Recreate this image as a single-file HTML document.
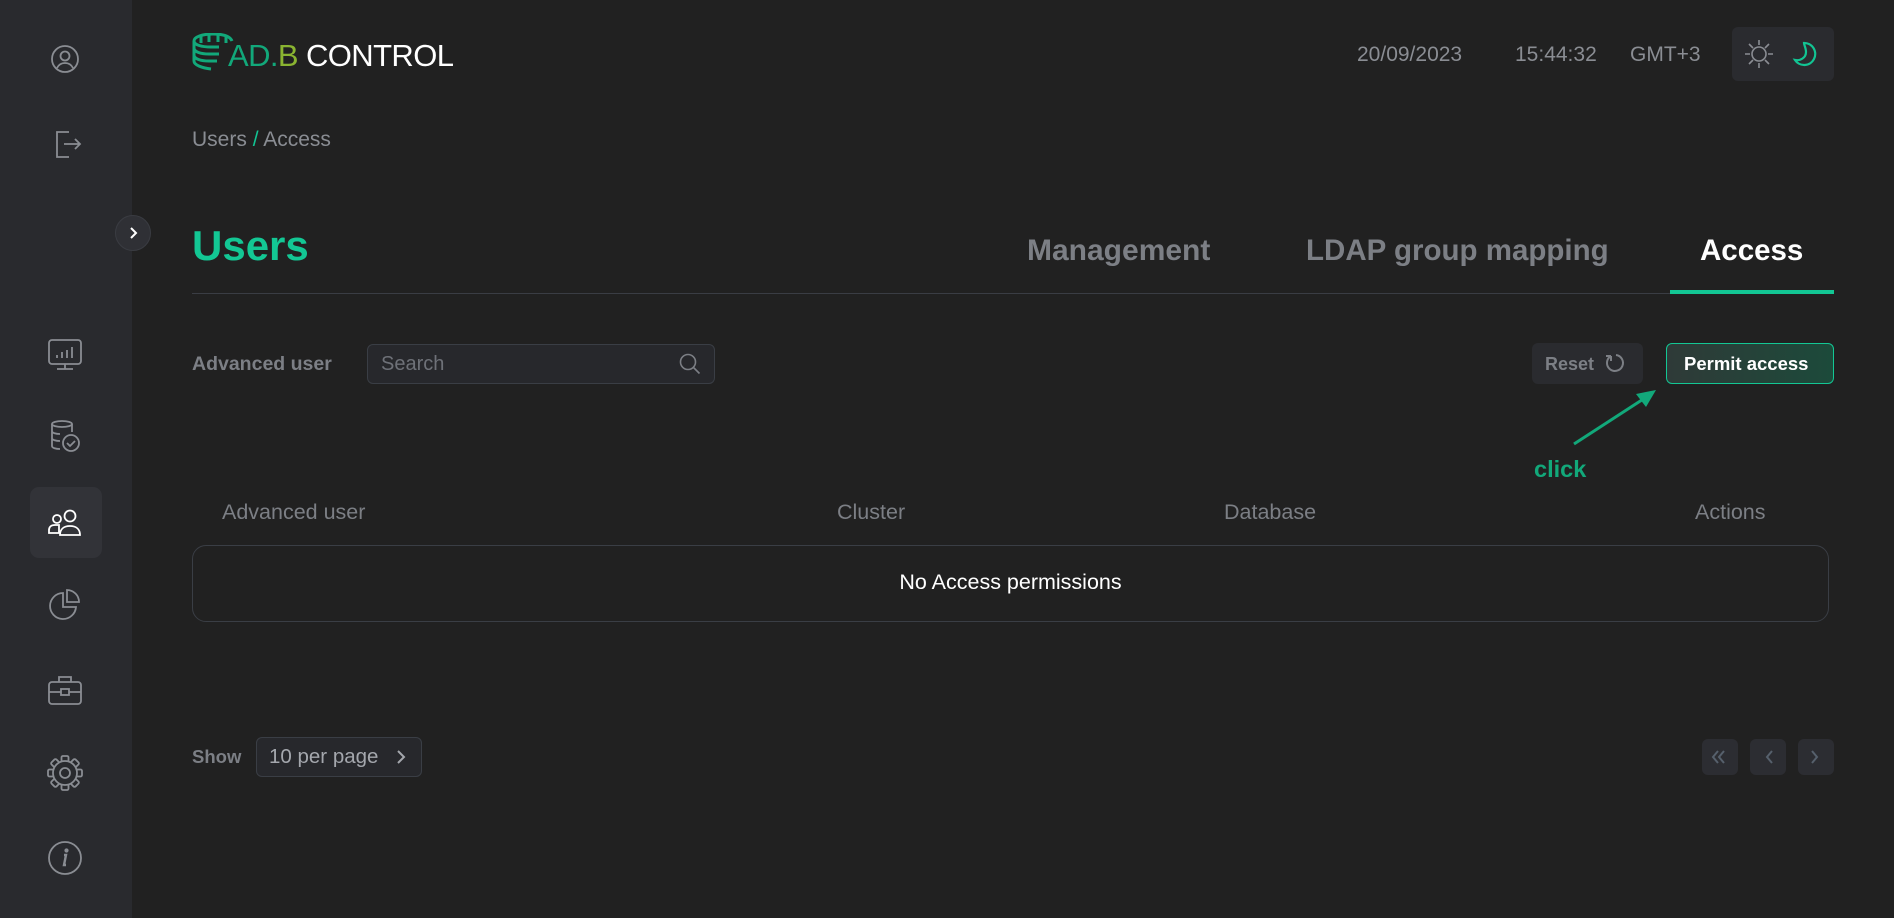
<!DOCTYPE html>
<html><head><meta charset="utf-8"><style>
*{margin:0;padding:0;box-sizing:border-box}
body{width:1894px;height:918px;background:#212121;font-family:"Liberation Sans",sans-serif;position:relative;overflow:hidden;color:#8a8d93}
.abs{position:absolute}
#side{left:0;top:0;width:132px;height:918px;background:#292a2e}
.ic{position:absolute;left:65px;transform:translate(-50%,-50%)}
.t{position:absolute;white-space:nowrap;line-height:1}
.box{position:absolute;border-radius:6px}
</style></head><body>
<div id="side" class="abs"></div>
<div class="box" style="left:30px;top:487px;width:72px;height:71px;background:#323338;border-radius:9px"></div>
<!-- sidebar icons -->
<svg class="ic" style="top:59px" width="30" height="30" viewBox="0 0 30 30" fill="none" stroke="#8a8d93" stroke-width="1.8"><circle cx="15" cy="15" r="13"/><circle cx="15" cy="12" r="4.5"/><path d="M7 24c2-4 5-5 8-5s6 1 8 5"/></svg>
<svg class="ic" style="top:144px;left:68px" width="32" height="32" viewBox="0 0 32 32" fill="none" stroke="#8a8d93" stroke-width="1.8"><path d="M17 4H5v25h12M12 16h16M23 11l5 5-5 5"/></svg>
<svg class="ic" style="top:354px" width="36" height="32" viewBox="0 0 36 32" fill="none" stroke="#8a8d93" stroke-width="1.8"><rect x="2" y="2" width="32" height="24" rx="3"/><path d="M10 31h16M18 26v5M10 20v-3M15 20v-6M20 20v-8M25 20v-11"/></svg>
<svg class="ic" style="top:436px" width="34" height="34" viewBox="0 0 34 34" fill="none" stroke="#8a8d93" stroke-width="1.8"><ellipse cx="14" cy="5" rx="10" ry="3"/><path d="M4 5v22c0 2 4 3 8 3M24 5v8M4 12c0 2 4 3 8 3M4 19c0 2 4 3 8 3"/><circle cx="23" cy="24" r="8"/><path d="M19 24l3 3 5-5"/></svg>
<svg class="ic" style="top:523px" width="36" height="30" viewBox="0 0 36 30" fill="none" stroke="#fff" stroke-width="1.8"><circle cx="10" cy="11" r="4"/><path d="M2 25v-3c0-3 2-5 6-5h4v8z"/><circle cx="23" cy="8" r="5.5"/><path d="M13 27c0-6 4-9 10-9s10 3 10 9z"/></svg>
<svg class="ic" style="top:605px" width="34" height="34" viewBox="0 0 34 34" fill="none" stroke="#8a8d93" stroke-width="1.8"><path d="M15 5a13 13 0 1 0 13 14H15z"/><path d="M19 2a12 12 0 0 1 12 12H19z"/></svg>
<svg class="ic" style="top:690px" width="36" height="32" viewBox="0 0 36 32" fill="none" stroke="#8a8d93" stroke-width="1.8"><rect x="2" y="8" width="32" height="22" rx="3"/><path d="M12 8V3h12v5M2 18h32"/><rect x="14" y="15" width="8" height="6" fill="#292a2e"/></svg>
<svg class="ic" style="top:773px" width="38" height="38" viewBox="0 0 38 38" fill="#292a2e" stroke="#8a8d93" stroke-width="1.8">
<g><rect x="15.5" y="2" width="7" height="8" rx="1.5"/><rect x="15.5" y="2" width="7" height="8" rx="1.5" transform="rotate(45 19 19)"/><rect x="15.5" y="2" width="7" height="8" rx="1.5" transform="rotate(90 19 19)"/><rect x="15.5" y="2" width="7" height="8" rx="1.5" transform="rotate(135 19 19)"/><rect x="15.5" y="2" width="7" height="8" rx="1.5" transform="rotate(180 19 19)"/><rect x="15.5" y="2" width="7" height="8" rx="1.5" transform="rotate(225 19 19)"/><rect x="15.5" y="2" width="7" height="8" rx="1.5" transform="rotate(270 19 19)"/><rect x="15.5" y="2" width="7" height="8" rx="1.5" transform="rotate(315 19 19)"/></g>
<circle cx="19" cy="19" r="12"/><circle cx="19" cy="19" r="5"/></svg>
<svg class="ic" style="top:858px" width="36" height="36" viewBox="0 0 36 36" fill="none" stroke="#8a8d93" stroke-width="1.8"><circle cx="18" cy="18" r="16"/><path d="M17 15h2l-2 10h2" stroke-width="2.4"/><circle cx="19.5" cy="10.5" r="1.2" fill="#8a8d93"/></svg>
<!-- collapse btn -->
<div class="abs" style="left:115px;top:215px;width:36px;height:36px;border-radius:50%;background:#2f3035;border:1px solid #3a3c42"></div>
<svg class="abs" style="left:126px;top:225px" width="14" height="16" viewBox="0 0 14 16" fill="none" stroke="#fff" stroke-width="2"><path d="M5 3l5 5-5 5"/></svg>
<!-- logo -->
<svg class="abs" style="left:192px;top:33px" width="42" height="38" viewBox="0 0 42 38" fill="none" stroke="#12a87a" stroke-width="3"><path d="M40 8C38 3 30 1 21 1 10 1 2 4 2 8v20c0 4 8 7 17 8"/><path d="M2 8c0 4 8 6 17 6h8M2 15c0 4 7 6 15 6h10M2 22c0 4 7 6 15 6h8M2 29"/><path d="M9 3v7M17 2v7M26 2v7M34 4v6"/></svg>
<div class="t" style="left:228px;top:40px;font-size:31px;letter-spacing:-0.6px"><span style="color:#12a87a">AD.</span><span style="color:#8ab431">B</span> <span style="color:#fff">CONTROL</span></div>
<!-- header right -->
<div class="t" style="left:1357px;top:44px;font-size:21px;color:#8a8d93">20/09/2023</div>
<div class="t" style="left:1515px;top:44px;font-size:21px;color:#8a8d93">15:44:32</div>
<div class="t" style="left:1630px;top:44px;font-size:21px;color:#8a8d93">GMT+3</div>
<div class="box" style="left:1732px;top:27px;width:102px;height:54px;background:#2a2b2f;border-radius:6px"></div>
<svg class="abs" style="left:1743px;top:38px" width="32" height="32" viewBox="0 0 32 32" fill="none" stroke="#8a8d93" stroke-width="1.6"><circle cx="16" cy="16" r="7"/><path d="M16 2v5M16 25v5M2 16h5M25 16h5M6 6l4 4M22 22l4 4M26 6l-4 4M10 22l-4 4"/></svg>
<svg class="abs" style="left:1790px;top:38px" width="32" height="32" viewBox="0 0 32 32" fill="none" stroke="#12c493" stroke-width="2.2"><path d="M14 5a11 11 0 1 1-9 17c5 1 11-2 11-8 0-4-2-7-2-9z"/></svg>
<!-- breadcrumb -->
<div class="t" style="left:192px;top:129px;font-size:21px;color:#8a8d93">Users <span style="color:#12c493">/</span> Access</div>
<!-- title & tabs -->
<div class="t" style="left:192px;top:225px;font-size:42px;font-weight:bold;color:#13c794">Users</div>
<div class="t" style="left:1027px;top:236px;font-size:30px;font-weight:bold;color:#7c7f85">Management</div>
<div class="t" style="left:1306px;top:236px;font-size:29.5px;font-weight:bold;color:#7c7f85">LDAP group mapping</div>
<div class="t" style="left:1700px;top:236px;font-size:29.5px;font-weight:bold;color:#fff">Access</div>
<div class="abs" style="left:192px;top:293px;width:1642px;height:1px;background:#3a3d44"></div>
<div class="abs" style="left:1670px;top:290px;width:164px;height:4px;background:#13c794"></div>
<!-- toolbar -->
<div class="t" style="left:192px;top:355px;font-size:19.5px;font-weight:bold;color:#7c7f85">Advanced user</div>
<div class="box" style="left:367px;top:344px;width:348px;height:40px;background:#27282c;border:1px solid #3a3e45"></div>
<div class="t" style="left:381px;top:354px;font-size:20px;color:#6e7178">Search</div>
<svg class="abs" style="left:678px;top:352px" width="24" height="24" viewBox="0 0 24 24" fill="none" stroke="#7c7f85" stroke-width="1.6"><circle cx="10" cy="10" r="7.5"/><path d="M15.5 15.5l6 6"/></svg>
<div class="box" style="left:1532px;top:343px;width:111px;height:41px;background:#2a2b2f"></div>
<div class="t" style="left:1545px;top:355px;font-size:18px;font-weight:bold;color:#7c7f85">Reset</div>
<svg class="abs" style="left:1605px;top:352px" width="22" height="22" viewBox="0 0 22 22" fill="none" stroke="#7c7f85" stroke-width="2"><path d="M6 4A8 8 0 1 0 11 3M6 4V9M6 4H1"/></svg>
<div class="box" style="left:1666px;top:343px;width:168px;height:41px;background:linear-gradient(90deg,#2f3a38,#1c4a3a);border:1.5px solid #13c794"></div>
<div class="t" style="left:1684px;top:355px;font-size:18.5px;font-weight:bold;color:#fff">Permit access</div>
<!-- arrow -->
<svg class="abs" style="left:1560px;top:380px" width="110" height="80" viewBox="0 0 110 80"><path d="M14 64L88 16" stroke="#12a87a" stroke-width="3"/><path d="M96 10L76 14L86 27z" fill="#12a87a"/></svg>
<div class="t" style="left:1534px;top:458px;font-size:23.5px;font-weight:bold;color:#12a87a">click</div>
<!-- table -->
<div class="t" style="left:222px;top:502px;font-size:21.5px;color:#7c7f85">Advanced user</div>
<div class="t" style="left:837px;top:502px;font-size:21.5px;color:#7c7f85">Cluster</div>
<div class="t" style="left:1224px;top:502px;font-size:21.5px;color:#7c7f85">Database</div>
<div class="t" style="left:1695px;top:502px;font-size:21.5px;color:#7c7f85">Actions</div>
<div class="box" style="left:192px;top:545px;width:1637px;height:77px;border:1px solid #3a3e45;border-radius:14px"></div>
<div class="t" style="left:192px;top:572px;width:1637px;text-align:center;font-size:21.5px;color:#fff">No Access permissions</div>
<!-- footer -->
<div class="t" style="left:192px;top:748px;font-size:18.5px;font-weight:bold;color:#7c7f85">Show</div>
<div class="box" style="left:256px;top:737px;width:166px;height:40px;background:#27282c;border:1px solid #3a3e45"></div>
<div class="t" style="left:269px;top:747px;font-size:20.5px;color:#a4a7ad">10 per page</div>
<svg class="abs" style="left:394px;top:748px" width="14" height="18" viewBox="0 0 14 18" fill="none" stroke="#a4a7ad" stroke-width="2"><path d="M4 3l6 6-6 6"/></svg>
<div class="box" style="left:1702px;top:739px;width:36px;height:36px;background:#2c2d32"></div>
<div class="box" style="left:1750px;top:739px;width:36px;height:36px;background:#2c2d32"></div>
<div class="box" style="left:1798px;top:739px;width:36px;height:36px;background:#2c2d32"></div>
<svg class="abs" style="left:1702px;top:739px" width="132" height="36" viewBox="0 0 132 36" fill="none" stroke="#56606c" stroke-width="2"><path d="M16 12l-5 6 5 6M22 12l-5 6 5 6M70 12l-5 6 5 6M110 12l5 6-5 6"/></svg>
</body></html>
